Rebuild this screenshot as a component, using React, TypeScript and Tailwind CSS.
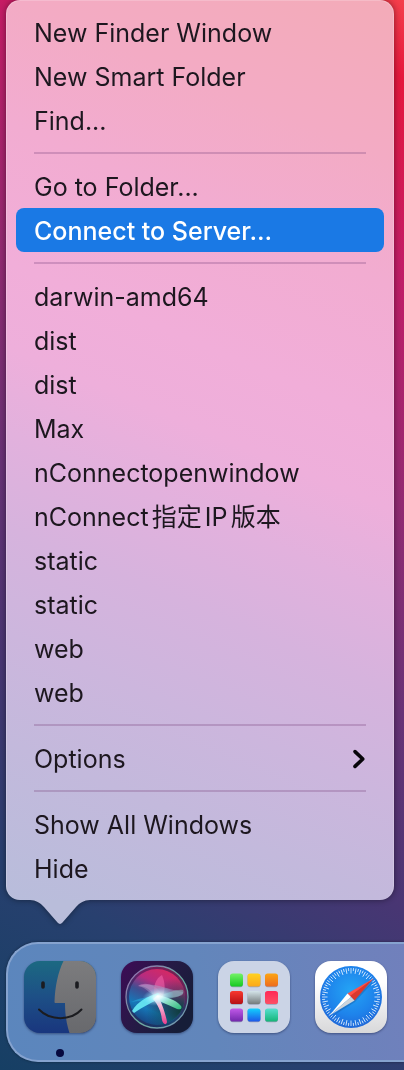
import clsx from 'clsx';
import type { ReactNode } from 'react';

interface MenuEntry {
    label: string;
    active?: boolean;
    submenu?: boolean;
}

const menuGroups: MenuEntry[][] = [
    [{ label: 'New Finder Window' }, { label: 'New Smart Folder' }, { label: 'Find...' }],
    [{ label: 'Go to Folder...' }, { label: 'Connect to Server...', active: true }],
    [
        { label: 'darwin-amd64' },
        { label: 'dist' },
        { label: 'dist' },
        { label: 'Max' },
        { label: 'nConnectopenwindow' },
        { label: 'nConnect指定IP版本' },
        { label: 'static' },
        { label: 'static' },
        { label: 'web' },
        { label: 'web' },
    ],
    [{ label: 'Options', submenu: true }],
    [{ label: 'Show All Windows' }, { label: 'Hide' }],
];

function MenuItem({ label, active, submenu }: MenuEntry) {
    return (
        <button
            type="button"
            role="menuitem"
            aria-haspopup={submenu ? 'menu' : undefined}
            className={clsx(
                'flex h-11 w-full items-center justify-between rounded-lg px-[18px] pt-0.5 text-left text-[25px] leading-8 whitespace-nowrap [text-autospace:normal]',
                active ? 'bg-[#1a79e5] font-medium text-white' : 'text-[#1d171f]',
            )}
        >
            {label}
            {submenu && (
                <svg viewBox="0 0 14 20" className="h-5 w-3.5" fill="none" stroke="#08060a" strokeWidth="3.6" strokeLinecap="round" strokeLinejoin="round">
                    <path d="M3 2.6 10.8 10 3 17.4" />
                </svg>
            )}
        </button>
    );
}

function ContextMenu() {
    return (
        <div className="drop-shadow-[0_0_3px_rgba(0,0,0,0.45)]">
            <div
                role="menu"
                className="rounded-[14px] border-x border-t border-white/20 bg-[linear-gradient(203deg,#f3abb8_0%,#f3abc4_15%,#f2acd1_27%,#f1aed9_40%,#eeafdb_48%,#e2b1dd_56%,#d6b3dd_65%,#ccb6dd_75%,#c3b9dc_85%,#b8bddb_100%)] bg-origin-border px-[9px] pt-[9px] pb-2.5"
            >
                {menuGroups.map((group, index) => (
                    <div key={index} role="group">
                        {index > 0 && <hr className="mx-[18px] my-2.5 border-t-2 border-[#7d4a82]/30" />}
                        {group.map((entry, i) => (
                            <MenuItem key={i} {...entry} />
                        ))}
                    </div>
                ))}
            </div>
            <svg viewBox="0 0 60 24" className="ml-6 block h-6 w-[60px]" fill="#b9bdda">
                <path d="M0-.5H60V0C54 .3 50 2.500 46 7L32.500 22.600Q30 25.400 27.500 22.600L14 7C10 2.500 6 .3 0 0Z" />
            </svg>
        </div>
    );
}

function FinderIcon() {
    return (
        <svg viewBox="0 0 72 72" className="size-full">
            <defs>
                <linearGradient id="finder-blue" x1="0" y1="0" x2="0" y2="1">
                    <stop offset="0" stopColor="#1c6982" />
                    <stop offset="0.5" stopColor="#1d4f86" />
                    <stop offset="1" stopColor="#19367e" />
                </linearGradient>
                <linearGradient id="finder-gray" x1="0" y1="0" x2="0" y2="1">
                    <stop offset="0" stopColor="#7c7c7e" />
                    <stop offset="1" stopColor="#68696d" />
                </linearGradient>
                <clipPath id="finder-shape">
                    <rect width="72" height="72" rx="16" />
                </clipPath>
            </defs>
            <g clipPath="url(#finder-shape)">
                <rect width="72" height="72" fill="url(#finder-blue)" />
                <path d="M39.500 0C34 11 31 26 30.500 41Q30.500 42 31.500 42H41C41 53 42.500 63 45.500 72H72V0Z" fill="url(#finder-gray)" />
            </g>
            <g fill="none" stroke="#1b1c20" strokeLinecap="round">
                <path d="M19 22v4M53 22v4" strokeWidth="3.6" />
                <path d="M15 48.500C26 60 47 60 57.500 48.500" strokeWidth="2" />
            </g>
        </svg>
    );
}

function SiriIcon() {
    return (
        <svg viewBox="0 0 72 72" className="size-full">
            <defs>
                <linearGradient id="siri-bg" x1="0" y1="0" x2="1" y2="0.6">
                    <stop offset="0" stopColor="#3e0b56" />
                    <stop offset="0.55" stopColor="#251a45" />
                    <stop offset="1" stopColor="#161d38" />
                </linearGradient>
                <linearGradient id="siri-orb" x1="0.75" y1="0" x2="0.3" y2="1">
                    <stop offset="0" stopColor="#db285f" />
                    <stop offset="0.3" stopColor="#b52c80" />
                    <stop offset="0.52" stopColor="#3e4f92" />
                    <stop offset="0.75" stopColor="#1677b8" />
                    <stop offset="1" stopColor="#183f7c" />
                </linearGradient>
                <linearGradient id="siri-ring" x1="0" y1="0" x2="1" y2="1">
                    <stop offset="0" stopColor="#9a66b4" />
                    <stop offset="0.55" stopColor="#6bab9f" />
                    <stop offset="1" stopColor="#7590b8" />
                </linearGradient>
                <radialGradient id="siri-shade" cx="0.9" cy="0.75" r="0.6">
                    <stop offset="0" stopColor="#103d40" />
                    <stop offset="1" stopColor="#103d40" stopOpacity="0" />
                </radialGradient>
                <radialGradient id="siri-glow">
                    <stop offset="0" stopColor="#fff" />
                    <stop offset="0.3" stopColor="#e3fcff" stopOpacity="0.8" />
                    <stop offset="1" stopColor="#65dcff" stopOpacity="0" />
                </radialGradient>
                <linearGradient id="siri-green" x1="0" y1="0" x2="1" y2="1">
                    <stop offset="0" stopColor="#e5ffff" />
                    <stop offset="1" stopColor="#29b879" />
                </linearGradient>
                <linearGradient id="siri-pink" x1="0" y1="0" x2="0" y2="1">
                    <stop offset="0" stopColor="#fff" />
                    <stop offset="1" stopColor="#ea3c8d" />
                </linearGradient>
            </defs>
            <rect width="72" height="72" rx="16" fill="url(#siri-bg)" />
            <circle cx="36" cy="36" r="30.500" fill="url(#siri-orb)" opacity="0.45" />
            <circle cx="36" cy="36" r="28" fill="url(#siri-orb)" />
            <circle cx="36" cy="36" r="28" fill="url(#siri-shade)" />
            <circle cx="36" cy="36" r="31" fill="none" stroke="url(#siri-ring)" strokeWidth="1.3" />
            <path d="M17 25C24 20 36 24 41 34L33 37C31 29 25 25 17 25Z" fill="#d882ca" opacity="0.5" />
            <path d="M34 37C31 26 35 17 41 14C44 21 45 29 41 37Z" fill="#f063a6" opacity="0.6" />
            <path d="M17 25C30 20 46 28 62 31C64 36 52 36 40 37C29 35 26 26 17 25Z" fill="#a8a7cc" opacity="0.45" />
            <path d="M36 36C46 32 56 28 62 29C65 34 54 38 39 38Z" fill="#8bc9c5" opacity="0.5" />
            <path d="M10 41C18 37 27 36 36 35L29 41C22 40 15 40 10 41Z" fill="#249fd5" opacity="0.7" />
            <path d="M11 50C17 40 26 36 37 32L42 37C32 40 22 46 13 52Z" fill="#65e6f2" opacity="0.95" />
            <path d="M36 34C45 36 54 38 60 45C62 49 57 49 54 47C46 43 41 42 35 38Z" fill="url(#siri-green)" />
            <path d="M37 34C41 43 45 54 46 61C45 65 42 63 41 59C40 50 37 44 32 38Z" fill="url(#siri-pink)" />
            <ellipse cx="37" cy="35.500" rx="16" ry="9" fill="url(#siri-glow)" transform="rotate(-12 37 35.500)" />
        </svg>
    );
}

const launchpadTiles = [
    ['#74f267', '#16c922'],
    ['#ffd21f', '#fca81b'],
    ['#fca512', '#ed6b1e'],
    ['#f8382f', '#b61015'],
    ['#d4e4e9', '#747b7c'],
    ['#ff2857', '#fc5065'],
    ['#c159e8', '#7128ab'],
    ['#12d0fd', '#1d57e9'],
    ['#55dfcf', '#15b578'],
];

function LaunchpadIcon() {
    return (
        <svg viewBox="0 0 72 72" className="size-full">
            <defs>
                {launchpadTiles.map(([from, to], i) => (
                    <linearGradient key={from} id={`tile-${i}`} x1="0" y1="0" x2="0" y2="1">
                        <stop offset="0" stopColor={from} />
                        <stop offset="1" stopColor={to} />
                    </linearGradient>
                ))}
            </defs>
            <rect width="72" height="72" rx="16" fill="#cbd4e6" />
            {launchpadTiles.map(([from], i) => {
                const x = 12 + (i % 3) * 17.5;
                const y = 12.5 + Math.floor(i / 3) * 17.5;
                return (
                    <g key={from}>
                        <rect x={x} y={y + 0.8} width="13" height="13" rx="2.800" fill="#5b6683" opacity="0.45" />
                        <rect x={x} y={y} width="13" height="13" rx="2.800" fill={`url(#tile-${i})`} />
                    </g>
                );
            })}
        </svg>
    );
}

function SafariIcon() {
    const ticks = Array.from({ length: 72 }, (_, i) => i);

    return (
        <svg viewBox="0 0 72 72" className="size-full">
            <defs>
                <linearGradient id="safari-case" x1="0" y1="0" x2="0" y2="1">
                    <stop offset="0.3" stopColor="#fff" />
                    <stop offset="1" stopColor="#d8d8da" />
                </linearGradient>
                <radialGradient id="safari-dial" cx="0.5" cy="0.4" r="0.6">
                    <stop offset="0" stopColor="#24a5f5" />
                    <stop offset="0.65" stopColor="#1e83eb" />
                    <stop offset="1" stopColor="#1f68d8" />
                </radialGradient>
            </defs>
            <rect width="72" height="72" rx="16" fill="url(#safari-case)" />
            <circle cx="36" cy="36" r="31" fill="url(#safari-dial)" />
            <g stroke="#e8f5ff" strokeWidth="0.8">
                {ticks.map((i) => (
                    <path key={i} d={i % 2 ? 'M36 7v3' : 'M36 7v5.500'} transform={`rotate(${i * 5} 36 36)`} />
                ))}
            </g>
            <path d="M59 20 40 41 16 56Z" fill="#164f92" opacity="0.35" />
            {/* north half red, south half white, both split by the needle's ridge */}
            <path d="M58.500 17.500 32.500 32.500 36 36Z" fill="#ff5148" />
            <path d="M58.500 17.500 35 35 39.500 39.500Z" fill="#d9382f" />
            <path d="M14.500 54.500 32.500 32.500 36 36Z" fill="#fff" />
            <path d="M14.500 54.500 36 36 39.500 39.500Z" fill="#cfd4da" />
        </svg>
    );
}

interface DockAppProps {
    name: string;
    running?: boolean;
    children: ReactNode;
}

function DockApp({ name, running, children }: DockAppProps) {
    return (
        <button type="button" aria-label={name} className="flex w-18 shrink-0 flex-col items-center gap-4">
            <span className="block size-18 drop-shadow-[0_1px_1px_rgba(20,30,70,0.5)]">{children}</span>
            {running && <span className="size-2 rounded-full bg-[#06093f]" />}
        </button>
    );
}

export default function App() {
    return (
        <main className="min-h-screen overflow-hidden bg-[linear-gradient(212deg,#f43f4b_0%,#e5173c_6%,#c31c66_20%,#922a72_38%,#683276_54%,#483673_69%,#28406f_84%,#163f64_100%)] pb-2 font-[Inter,'Noto_Sans_CJK_SC',sans-serif]">
            <div className="mr-2.5 ml-1.5">
                <ContextMenu />
            </div>
            <nav
                aria-label="Dock"
                className="mt-[18px] ml-1.5 flex h-[120px] items-start gap-[25px] rounded-l-[32px] border-y-2 border-l-2 border-[#86a3cf] bg-[linear-gradient(75deg,#5b86bd_0%,#6286bb_50%,#7180bc_100%)] pt-[17px] pl-4 shadow-[0_0_3px_rgba(0,0,0,0.4)]"
            >
                <DockApp name="Finder" running>
                    <FinderIcon />
                </DockApp>
                <DockApp name="Siri">
                    <SiriIcon />
                </DockApp>
                <DockApp name="Launchpad">
                    <LaunchpadIcon />
                </DockApp>
                <DockApp name="Safari">
                    <SafariIcon />
                </DockApp>
            </nav>
        </main>
    );
}
